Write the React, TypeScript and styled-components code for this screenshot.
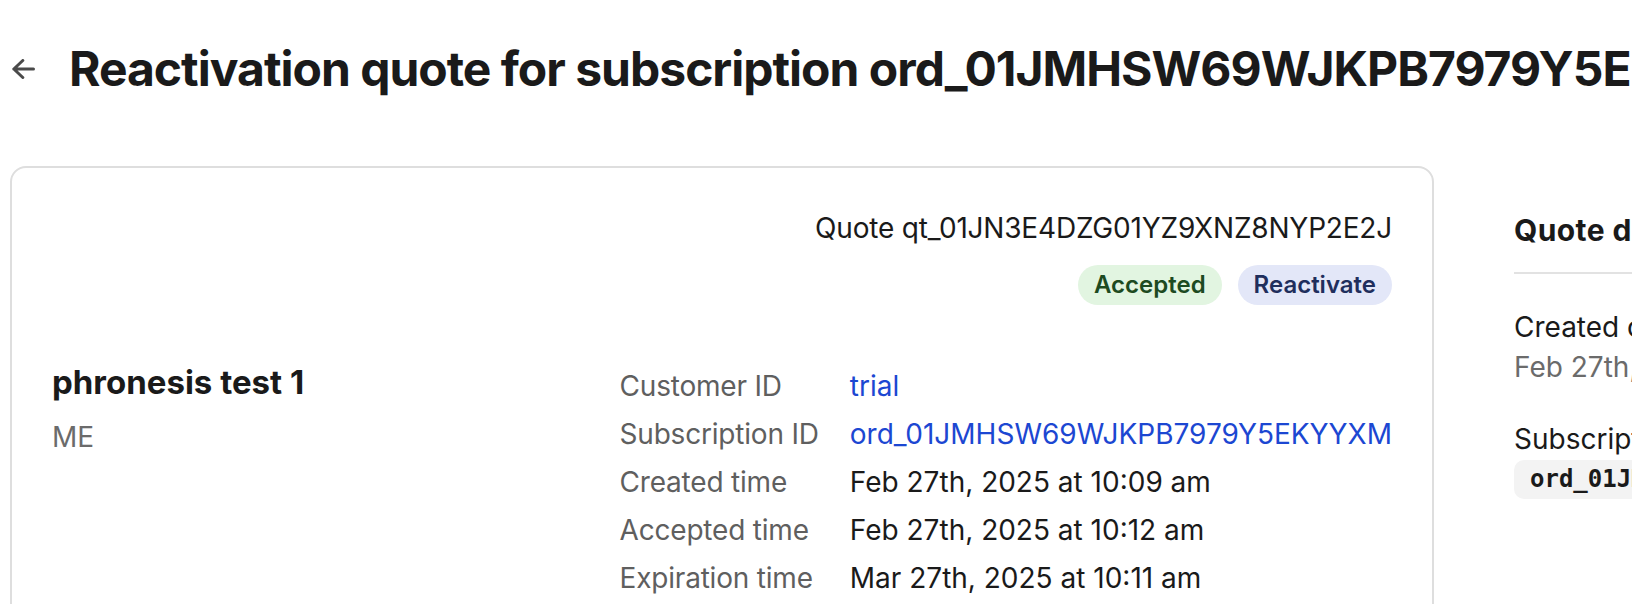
import * as React from "react";
import styled, { createGlobalStyle } from "styled-components";

const GlobalStyle = createGlobalStyle`
  html, body {
    margin: 0;
    padding: 0;
    background: #ffffff;
    overflow: hidden;
  }
  body {
    font-family: Inter, "Noto Sans", sans-serif;
    color: #1a1a1a;
  }
`;

const Page = styled.div`
  width: max-content;
  padding: 40px 0 0 10px;
`;

const Header = styled.div`
  display: flex;
  align-items: center;
  gap: 34px;
  padding-left: 2px;
`;

const BackButton = styled.div`
  display: flex;
  color: #4a4a4a;
  cursor: pointer;
`;

const Title = styled.h1`
  margin: 0;
  font-size: 48px;
  line-height: 57.6px;
  font-weight: 700;
  letter-spacing: -1px;
  white-space: nowrap;
  color: #1a1a1a;
`;

const Layout = styled.div`
  display: flex;
  align-items: flex-start;
  gap: 80px;
  margin-top: 68px;
`;

const Card = styled.div`
  box-sizing: border-box;
  width: 1424px;
  flex: 0 0 auto;
  border: 2px solid #dedede;
  border-radius: 16px;
  padding: 42px 40px 40px;
`;

const CardHeader = styled.div`
  display: flex;
  flex-direction: column;
  align-items: flex-end;
`;

const QuoteId = styled.div`
  font-size: 28px;
  line-height: 36px;
  letter-spacing: -0.2px;
  color: #1a1a1a;
`;

const Badges = styled.div`
  display: flex;
  gap: 16px;
  margin-top: 19px;
`;

const tones = {
  green: { bg: "#e2f5e1", fg: "#1d4a21" },
  blue: { bg: "#e3e7f8", fg: "#1f2e5d" },
};

const Badge = styled.span<{ $tone: keyof typeof tones }>`
  display: inline-flex;
  align-items: center;
  height: 40px;
  padding: 0 16px;
  border-radius: 20px;
  font-size: 24px;
  font-weight: 600;
  background: ${(p) => tones[p.$tone].bg};
  color: ${(p) => tones[p.$tone].fg};
`;

const CardBody = styled.div`
  display: flex;
  justify-content: space-between;
  align-items: flex-start;
  margin-top: 55px;
`;

const Customer = styled.div`
  display: flex;
  flex-direction: column;
`;

const CustomerName = styled.div`
  font-size: 33px;
  line-height: 44px;
  font-weight: 700;
`;

const CustomerCountry = styled.div`
  margin-top: 13px;
  font-size: 28px;
  line-height: 40px;
  color: #6b6b6b;
`;

const Details = styled.dl`
  display: grid;
  grid-template-columns: auto auto;
  column-gap: 31px;
  margin: 2px 0 0;
  font-size: 28px;
  line-height: 48px;
`;

const Term = styled.dt`
  color: #5f5f5f;
  letter-spacing: -0.2px;
`;

const Value = styled.dd<{ $link?: boolean }>`
  margin: 0;
  color: ${(p) => (p.$link ? "#1c47d2" : "#1a1a1a")};
  cursor: ${(p) => (p.$link ? "pointer" : "default")};
`;

const Sidebar = styled.aside`
  width: 480px;
  flex: 0 0 auto;
  padding-top: 46px;
`;

const SidebarTitle = styled.h2`
  margin: 0;
  font-size: 30px;
  line-height: 36px;
  font-weight: 700;
  letter-spacing: 0.4px;
  white-space: nowrap;
`;

const Divider = styled.hr`
  margin: 24px 0 0;
  border: 0;
  height: 2px;
  background: #e2e2e2;
`;

const Fields = styled.div`
  display: flex;
  flex-direction: column;
  gap: 32px;
  margin-top: 33px;
`;

const Field = styled.div`
  display: flex;
  flex-direction: column;
  align-items: flex-start;
  font-size: 28px;
  line-height: 40px;
  white-space: nowrap;
`;

const FieldLabel = styled.div`
  color: #1a1a1a;
`;

const FieldValue = styled.div`
  color: #6b6b6b;
`;

const Code = styled.code`
  display: inline-block;
  margin-top: 1px;
  padding: 4px 16px;
  border-radius: 10px;
  background: #f3f3f3;
  font-family: "DejaVu Sans Mono", "Liberation Mono", monospace;
  font-size: 24px;
  line-height: 31px;
  font-weight: 700;
  color: #1a1a1a;
`;

const BackArrow = () => (
  <svg width="23" height="20" viewBox="0 0 23 20" fill="none">
    <path
      d="M21.5 10H1.8M10.8 1.5L1.8 10l9 8.5"
      stroke="currentColor"
      strokeWidth="3"
      strokeLinecap="round"
      strokeLinejoin="round"
    />
  </svg>
);

const subscriptionId = "ord_01JMHSW69WJKPB7979Y5EKYYXM";

const details: { label: string; value: string; link?: boolean }[] = [
  { label: "Customer ID", value: "trial", link: true },
  { label: "Subscription ID", value: subscriptionId, link: true },
  { label: "Created time", value: "Feb 27th, 2025 at 10:09 am" },
  { label: "Accepted time", value: "Feb 27th, 2025 at 10:12 am" },
  { label: "Expiration time", value: "Mar 27th, 2025 at 10:11 am" },
];

export default function App() {
  return (
    <>
      <GlobalStyle />
      <Page>
        <Header>
          <BackButton>
            <BackArrow />
          </BackButton>
          <Title>Reactivation quote for subscription {subscriptionId}</Title>
        </Header>
        <Layout>
          <Card>
            <CardHeader>
              <QuoteId>Quote qt_01JN3E4DZG01YZ9XNZ8NYP2E2J</QuoteId>
              <Badges>
                <Badge $tone="green">Accepted</Badge>
                <Badge $tone="blue">Reactivate</Badge>
              </Badges>
            </CardHeader>
            <CardBody>
              <Customer>
                <CustomerName>phronesis test 1</CustomerName>
                <CustomerCountry>ME</CustomerCountry>
              </Customer>
              <Details>
                {details.map((d) => (
                  <React.Fragment key={d.label}>
                    <Term>{d.label}</Term>
                    <Value $link={d.link}>{d.value}</Value>
                  </React.Fragment>
                ))}
              </Details>
            </CardBody>
          </Card>
          <Sidebar>
            <SidebarTitle>Quote details</SidebarTitle>
            <Divider />
            <Fields>
              <Field>
                <FieldLabel>Created on</FieldLabel>
                <FieldValue>Feb 27th, 2025 at 10:09 am</FieldValue>
              </Field>
              <Field>
                <FieldLabel>Subscription</FieldLabel>
                <Code>{subscriptionId}</Code>
              </Field>
            </Fields>
          </Sidebar>
        </Layout>
      </Page>
    </>
  );
}
